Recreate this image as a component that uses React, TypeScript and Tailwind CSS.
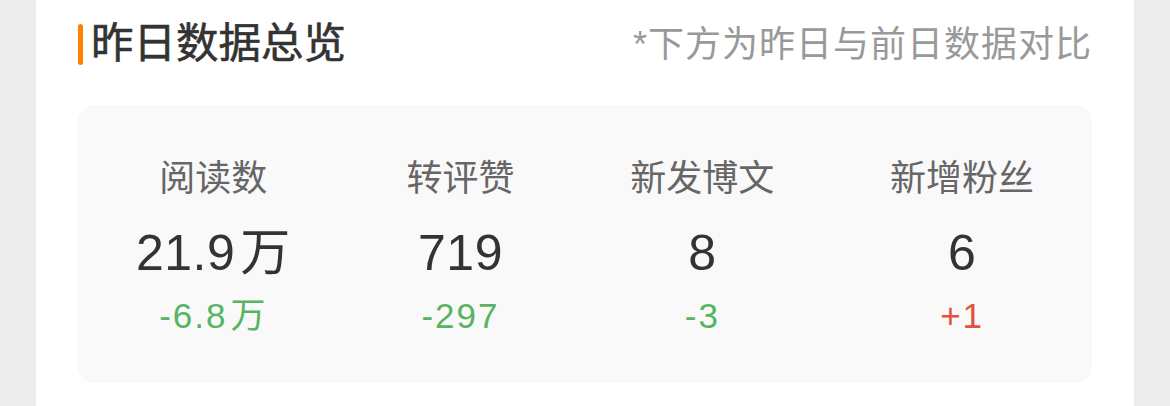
import React from 'react'

// yesterday vs. the day before
const stats = [
    { label: '阅读数', value: '21.9', unit: '万', diff: '-6.8', diffUnit: '万', up: false },
    { label: '转评赞', value: '719', unit: '', diff: '-297', diffUnit: '', up: false },
    { label: '新发博文', value: '8', unit: '', diff: '-3', diffUnit: '', up: false },
    { label: '新增粉丝', value: '6', unit: '', diff: '+1', diffUnit: '', up: true },
]

export default function App() {
    return (
        <div className="w-[1170px] h-[406px] bg-[#ededed] overflow-hidden" style={{ fontFamily: '"Liberation Sans", "Noto Sans CJK SC", sans-serif' }}>
            <div className="mx-[36px] h-full bg-white px-[42px]">
                {/* header */}
                <div className="flex items-center justify-between pt-[20px] h-[68px]">
                    <div className="flex items-center">
                        <span className="w-[5px] h-[41px] rounded-full bg-[#ff8200]" />
                        <h1 className="ml-[8px] text-[42.5px] leading-[48px] font-normal text-[#333333] [-webkit-text-stroke:0.6px_#333333]">昨日数据总览</h1>
                    </div>
                    <p className="text-[36px] leading-[44px] tracking-[1px] text-[#999999] mt-[2px]">*下方为昨日与前日数据对比</p>
                </div>

                {/* stats panel */}
                <div className="mt-[37px] h-[278px] rounded-[16px] bg-[#f9f9f9] flex justify-around pt-[52px]">
                    {stats.map((s) => (
                        <div key={s.label} className="flex flex-col items-center">
                            <span className="text-[36px] leading-[44px] text-[#666666]">{s.label}</span>
                            <span className="mt-[22px] text-[50px] leading-[60px] text-[#333333] tracking-[0.5px]">
                                {s.value}
                                {s.unit && <span className="ml-[5px]">{s.unit}</span>}
                            </span>
                            <span className={'mt-[13px] text-[35px] leading-[40px] tracking-[2px] ' + (s.up ? 'text-[#e0533c]' : 'text-[#58b463]')}>
                                {s.diff}
                                {s.diffUnit && <span className="ml-[3px]">{s.diffUnit}</span>}
                            </span>
                        </div>
                    ))}
                </div>
            </div>
        </div>
    )
}
